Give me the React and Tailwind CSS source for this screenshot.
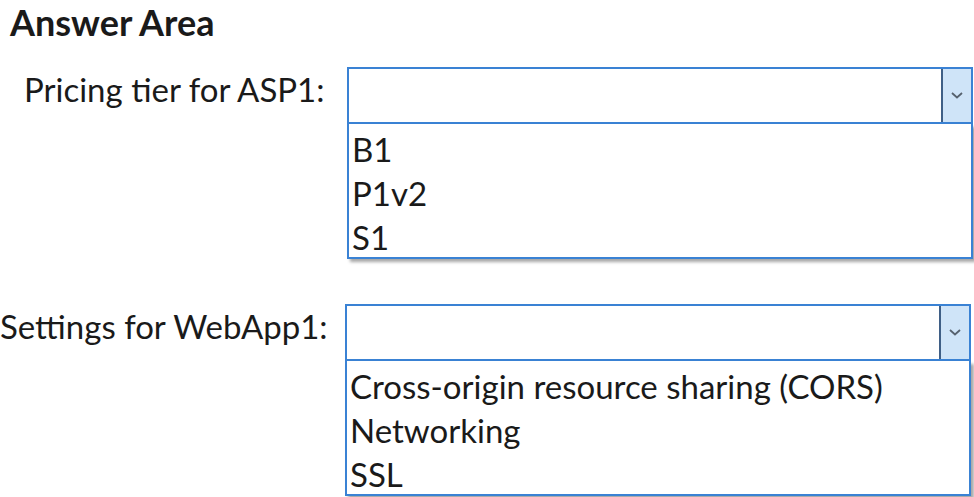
import React from 'react';

// ドロップダウンの矢印
const Chevron = () => (
  <svg width="14" height="9" viewBox="0 0 14 9" fill="none">
    <path d="M2 2 L7 6.5 L12 2" stroke="#56616e" strokeWidth="1.8" />
  </svg>
);

// 開いた状態のドロップダウン
const OpenSelect = ({ options }) => (
  <div className="w-[626px]">
    <div className="flex h-[57px] border-2 border-[#3a82d4] bg-white">
      <div className="flex-1" />
      <div className="flex w-[30px] items-center justify-center border-l-2 border-[#3f5f86] bg-[#cfe4f8]">
        <Chevron />
      </div>
    </div>
    <div className="flex h-[135px] flex-col border-2 border-t-0 border-[#3a82d4] bg-white pl-[3px] pt-[3px] shadow-[3px_3px_3px_rgba(0,0,0,0.35)]">
      {options.map(opt => (
        <div key={opt} className="h-[44px] whitespace-nowrap text-[33px] leading-[44px] text-[#1a1a1a]">{opt}</div>
      ))}
    </div>
  </div>
);

const App = () => {
  return (
    <div className="h-[497px] w-[974px] overflow-hidden bg-white font-['Lato','Open_Sans',sans-serif] text-[#1a1a1a]">
      <h1 className="pl-[10px] text-[36px] font-bold leading-[44px]">Answer Area</h1>
      <div className="mt-[23px] flex items-start">
        <div className="w-[347px] shrink-0 whitespace-nowrap pl-[24px] text-[33px] leading-[44px]">Pricing tier for ASP1:</div>
        <OpenSelect options={['B1', 'P1v2', 'S1']} />
      </div>
      <div className="mt-[45px] flex items-start">
        <div className="w-[345px] shrink-0 whitespace-nowrap text-[33px] leading-[44px]">Settings for WebApp1:</div>
        <OpenSelect options={['Cross-origin resource sharing (CORS)', 'Networking', 'SSL']} />
      </div>
    </div>
  );
};

export default App;
